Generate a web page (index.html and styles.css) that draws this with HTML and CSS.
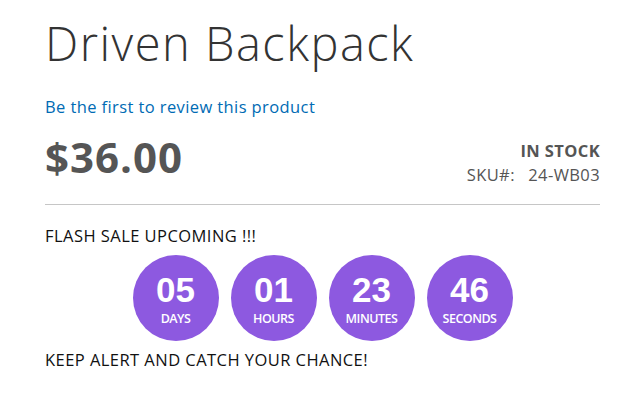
FILE: index.html
```html
<!DOCTYPE html>
<html lang="en">
<head>
    <meta charset="UTF-8">
    <meta name="viewport" content="width=device-width, initial-scale=1.0">
    <title>Driven Backpack</title>
    <link rel="stylesheet" href="styles.css">
</head>
<body>
    <div class="product-info">
        <h1 class="page-title">Driven Backpack</h1>
        <a class="review-link" href="#">Be the first to review this product</a>

        <div class="price-row">
            <div class="price">$36.00</div>
            <div class="stock-info">
                <div class="stock">In stock</div>
                <div class="sku">SKU#:&nbsp; 24-WB03</div>
            </div>
        </div>

        <div class="flash-sale">
            <p class="sale-title">FLASH SALE UPCOMING !!!</p>
            <div class="countdown">
                <div class="circle"><span class="num">05</span><span class="unit">Days</span></div>
                <div class="circle"><span class="num">01</span><span class="unit">Hours</span></div>
                <div class="circle"><span class="num">23</span><span class="unit">Minutes</span></div>
                <div class="circle"><span class="num">46</span><span class="unit">Seconds</span></div>
            </div>
            <p class="sale-note">KEEP ALERT AND CATCH YOUR CHANCE!</p>
        </div>
    </div>
</body>
</html>
```

FILE: styles.css
```css
body {
    margin: 0;
    background-color: #fff;
    font-family: "Open Sans", "Liberation Sans", sans-serif;
    color: #333;
}
.product-info {
    width: 555px;
    padding-left: 45px;
}
.page-title {
    margin: 18px 0 0;
    font-size: 47px;
    font-weight: 300;
    line-height: 1.1;
    letter-spacing: 1.5px;
    color: #333;
}
.review-link {
    display: block;
    margin-top: 25px;
    font-size: 16.5px;
    line-height: 1.4;
    letter-spacing: 0.4px;
    color: #006bb4;
    text-decoration: none;
}
.price-row {
    display: flex;
    justify-content: space-between;
    align-items: flex-start;
    margin-top: 18px;
    padding-bottom: 17px;
    border-bottom: 1px solid #c6c6c6;
}
.price {
    font-size: 42px;
    font-weight: 700;
    line-height: 1;
    letter-spacing: 1px;
    color: #555;
}
.stock-info {
    text-align: right;
    color: #555;
    font-size: 16.5px;
    line-height: 24px;
    letter-spacing: 0.4px;
}
.stock {
    font-weight: 700;
    text-transform: uppercase;
    margin-top: 3px;
}
.sku {
    word-spacing: 2px;
}
.flash-sale {
    color: #111;
    font-size: 16.5px;
    letter-spacing: 0.45px;
}
.sale-title {
    margin: 19px 0 0;
    line-height: 1.4;
}
.countdown {
    display: flex;
    justify-content: center;
    gap: 12px;
    margin-top: 8px;
    letter-spacing: 0;
}
.circle {
    width: 86px;
    height: 86px;
    border-radius: 50%;
    background-color: #8d59e0;
    color: #fff;
    display: flex;
    flex-direction: column;
    align-items: center;
    box-sizing: border-box;
    padding-top: 18px;
}
.num {
    font-family: "Liberation Sans", Arial, sans-serif;
    font-weight: 700;
    font-size: 35px;
    line-height: 34px;
}
.unit {
    margin-top: 4px;
    font-size: 12.5px;
    font-weight: 600;
    line-height: 1.2;
    text-transform: uppercase;
    letter-spacing: -0.5px;
}
.sale-note {
    margin: 7px 0 0;
    line-height: 1.4;
}
```
